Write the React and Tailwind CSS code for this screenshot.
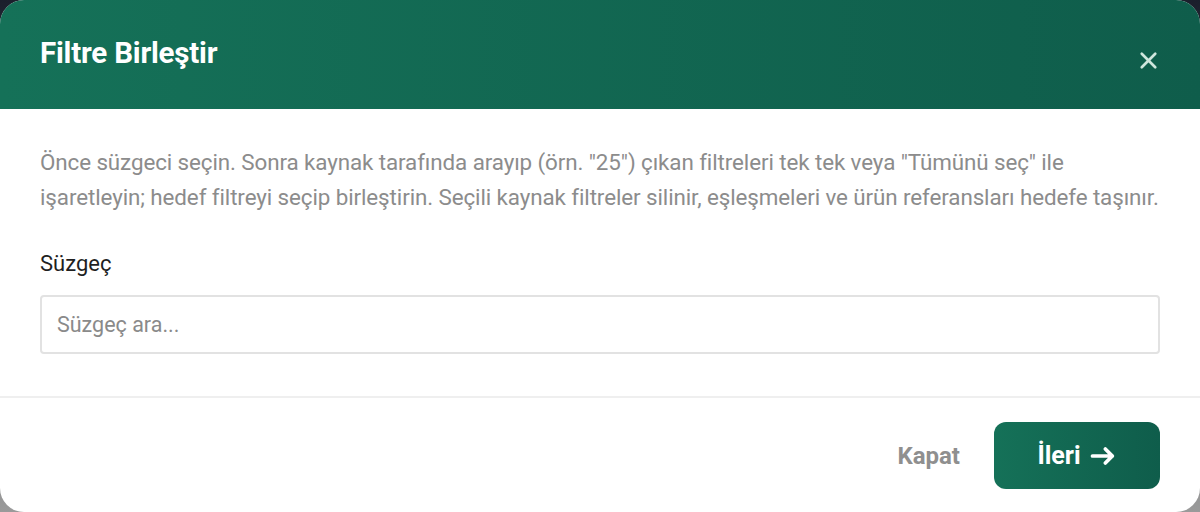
import { X } from "lucide-react";

function ArrowIcon({ className = "h-6 w-6" }) {
  return (
    <svg aria-hidden="true" viewBox="0 0 24 24" fill="none" stroke="currentColor" strokeWidth="3.2" className={className}>
      <path strokeLinecap="round" strokeLinejoin="round" d="M3 12h17M14 6l6 6-6 6" />
    </svg>
  );
}

export default function App() {
  return (
    <div
      className="h-[512px] w-[1200px] overflow-hidden bg-gradient-to-b from-[#1b1f2c] via-[#5a5d63] to-[#9a9a9a]"
      style={{ fontFamily: "Roboto, 'Liberation Sans', sans-serif" }}
    >
      <div className="flex h-full flex-col overflow-hidden rounded-[24px] bg-white">
        <header className="flex h-[109px] shrink-0 items-start justify-between bg-gradient-to-r from-[#157158] to-[#0f5d4b] px-10 pt-[34px]">
          <h2 className="text-[29.5px] font-bold leading-[38px] tracking-[-0.2px] text-white">Filtre Birleştir</h2>
          <button type="button" className="mt-[13px] -mr-[2px] text-[#cfe6dd]">
            <X className="h-[27px] w-[27px]" strokeWidth={2.4} />
          </button>
        </header>

        <div className="px-10 pt-[36px]">
          <p className="text-[22.4px] leading-[35px] tracking-[-0.1px] text-[#8c8c8c]">
            Önce süzgeci seçin. Sonra kaynak tarafında arayıp (örn. "25") çıkan filtreleri tek tek veya "Tümünü seç" ile
            işaretleyin; hedef filtreyi seçip birleştirin. Seçili kaynak filtreler silinir, eşleşmeleri ve ürün referansları hedefe taşınır.
          </p>
          <label className="mt-[36px] block text-[22px] leading-[26px] text-[#1f1f1f]">Süzgeç</label>
          <input
            type="text"
            placeholder="Süzgeç ara..."
            className="mt-[18px] h-[59px] w-full rounded-[4px] border-2 border-[#e2e2e2] px-[15px] text-[21.5px] text-[#333] placeholder:text-[#8a8a8a] outline-none"
          />
        </div>

        <div className="mt-[42px] border-t-2 border-[#efefef]" />

        <footer className="flex items-center justify-end gap-[34px] px-10 pt-[24px]">
          <button type="button" className="text-[24px] font-bold text-[#8f8f8f]">
            Kapat
          </button>
          <button
            type="button"
            className="flex h-[67px] w-[166px] items-center justify-center gap-[8px] rounded-[12px] bg-gradient-to-r from-[#157158] to-[#0f5d4b] text-[25px] font-bold text-white"
          >
            İleri
            <ArrowIcon className="h-[28px] w-[28px]" />
          </button>
        </footer>
      </div>
    </div>
  );
}
